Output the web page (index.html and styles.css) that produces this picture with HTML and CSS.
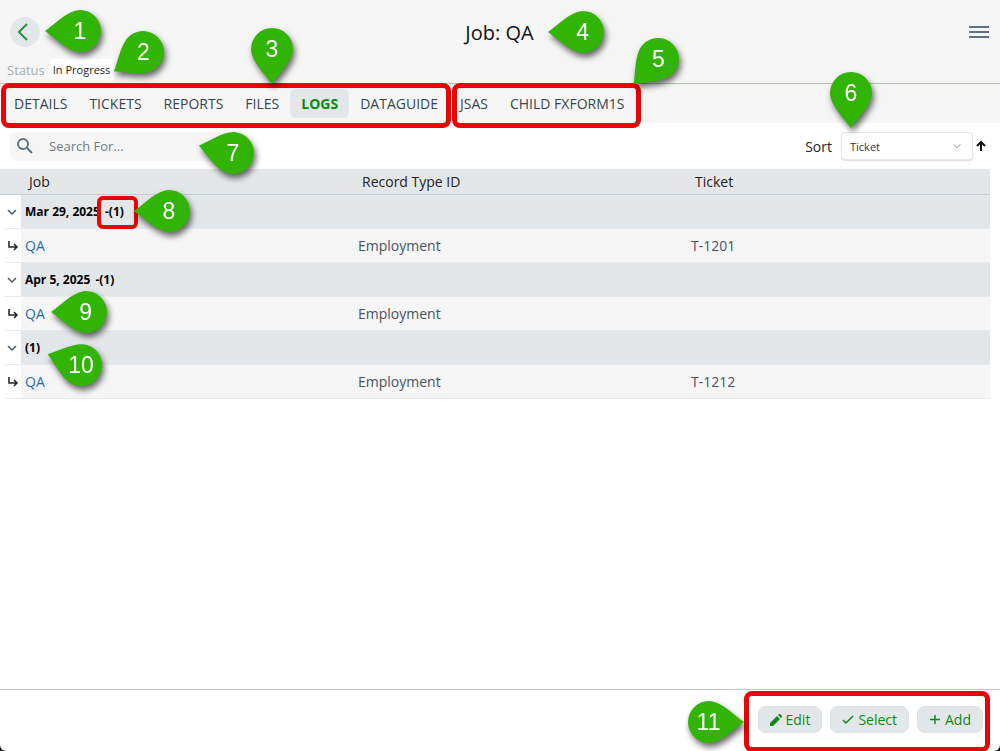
FILE: index.html
```html
<!DOCTYPE html>
<html lang="en">
<head>
    <meta charset="UTF-8">
    <meta name="viewport" content="width=device-width, initial-scale=1.0">
    <title>Job: QA</title>
    <link rel="stylesheet" href="styles.css">
</head>
<body>

<svg class="defs" aria-hidden="true">
    <symbol id="drop" viewBox="0 0 56 42">
        <path d="M0 21C9 15 23 0 35 0A21 21 0 0 1 35 42C23 42 9 27 0 21Z"/>
    </symbol>
    <symbol id="chevron" viewBox="0 0 10 10">
        <path d="M1 3l4 4 4-4"/>
    </symbol>
    <symbol id="child" viewBox="0 0 12 12">
        <path d="M2 1v6h8M7 4l3 3-3 3"/>
    </symbol>
</svg>

<div class="app">
    <!-- Header -->
    <header class="header">
        <div class="title-bar">
            <div class="anchor">
                <button class="back" aria-label="Back">
                    <svg class="line-icon" width="12" height="18" viewBox="0 0 12 18"><path d="M10 1L2 9l8 8"/></svg>
                </button>
                <span class="pin pin-1"><svg><use href="#drop"/></svg><b>1</b></span>
            </div>
            <h1 class="title anchor">Job: QA
                <span class="pin pin-4"><svg><use href="#drop"/></svg><b>4</b></span>
            </h1>
            <button class="menu" aria-label="Menu">
                <svg class="line-icon" width="20" height="14" viewBox="0 0 20 14"><path d="M0 2h20M0 7h20M0 12h20"/></svg>
            </button>
        </div>
        <div class="status">
            <span>Status</span>
            <span class="status-value anchor">In Progress
                <span class="pin pin-2"><svg><use href="#drop"/></svg><b>2</b></span>
            </span>
        </div>
    </header>

    <!-- Tabs -->
    <nav class="tabs">
        <div class="tab-group anchor">
            <a class="tab" href="#">DETAILS</a>
            <a class="tab" href="#">TICKETS</a>
            <a class="tab" href="#">REPORTS</a>
            <a class="tab" href="#">FILES</a>
            <a class="tab active" href="#">LOGS</a>
            <a class="tab" href="#">DATAGUIDE</a>
            <span class="box box-tabs"></span>
            <span class="pin pin-3"><svg><use href="#drop"/></svg><b>3</b></span>
        </div>
        <div class="tab-group anchor">
            <a class="tab" href="#">JSAS</a>
            <a class="tab" href="#">CHILD FXFORM1S</a>
            <span class="box box-forms"></span>
            <span class="pin pin-5"><svg><use href="#drop"/></svg><b>5</b></span>
        </div>
    </nav>

    <!-- Search and sort -->
    <div class="toolbar">
        <div class="search anchor">
            <svg class="line-icon" width="16" height="16" viewBox="0 0 16 16"><circle cx="6" cy="6" r="5"/><path d="M10 10l5 5"/></svg>
            <input type="text" placeholder="Search For..." aria-label="Search">
            <span class="pin pin-7"><svg><use href="#drop"/></svg><b>7</b></span>
        </div>
        <div class="sort">
            <label for="sort">Sort</label>
            <div class="select anchor">
                <select id="sort">
                    <option>Ticket</option>
                    <option>Job</option>
                </select>
                <svg class="select-arrow" width="8" height="8"><use href="#chevron"/></svg>
                <span class="pin pin-6"><svg><use href="#drop"/></svg><b>6</b></span>
            </div>
            <button class="direction" aria-label="Ascending">
                <svg class="line-icon" width="12" height="12" viewBox="0 0 12 12"><path d="M6 11V2M2 6l4-4 4 4"/></svg>
            </button>
        </div>
    </div>

    <!-- Log list -->
    <main class="content">
        <table class="logs">
            <colgroup>
                <col class="col-edge">
                <col class="col-toggle">
                <col class="col-data">
                <col class="col-data">
                <col>
            </colgroup>
            <thead>
                <tr>
                    <th colspan="2"></th>
                    <th>Job</th>
                    <th>Record Type ID</th>
                    <th>Ticket</th>
                </tr>
            </thead>
            <tbody>
                <tr class="group">
                    <td class="edge"></td>
                    <td class="toggle"><svg width="10" height="10"><use href="#chevron"/></svg></td>
                    <td colspan="3">Mar 29, 2025 <span class="count anchor">-(1)
                        <span class="box box-count"></span>
                        <span class="pin pin-8"><svg><use href="#drop"/></svg><b>8</b></span>
                    </span></td>
                </tr>
                <tr class="item">
                    <td class="edge"></td>
                    <td class="toggle"><svg width="12" height="12"><use href="#child"/></svg></td>
                    <td><a href="#">QA</a></td>
                    <td>Employment</td>
                    <td>T-1201</td>
                </tr>
                <tr class="group">
                    <td class="edge"></td>
                    <td class="toggle"><svg width="10" height="10"><use href="#chevron"/></svg></td>
                    <td colspan="3">Apr 5, 2025 <span class="count">-(1)</span></td>
                </tr>
                <tr class="item">
                    <td class="edge"></td>
                    <td class="toggle"><svg width="12" height="12"><use href="#child"/></svg></td>
                    <td><a class="anchor" href="#">QA
                        <span class="pin pin-9"><svg><use href="#drop"/></svg><b>9</b></span>
                    </a></td>
                    <td>Employment</td>
                    <td></td>
                </tr>
                <tr class="group">
                    <td class="edge"></td>
                    <td class="toggle"><svg width="10" height="10"><use href="#chevron"/></svg></td>
                    <td colspan="3"><span class="anchor">(1)
                        <span class="pin pin-10"><svg><use href="#drop"/></svg><b>10</b></span>
                    </span></td>
                </tr>
                <tr class="item">
                    <td class="edge"></td>
                    <td class="toggle"><svg width="12" height="12"><use href="#child"/></svg></td>
                    <td><a href="#">QA</a></td>
                    <td>Employment</td>
                    <td>T-1212</td>
                </tr>
            </tbody>
        </table>
    </main>

    <!-- Actions -->
    <footer class="footer">
        <div class="actions anchor">
            <button class="action">
                <svg width="12" height="12" viewBox="0 0 12 12"><path class="solid" d="M0 12V9l7-7 3 3-7 7zM8 1l1-1h1l2 2v1l-1 1z"/></svg>
                Edit
            </button>
            <button class="action">
                <svg width="12" height="12" viewBox="0 0 12 12"><path d="M1 6l3 3 7-7"/></svg>
                Select
            </button>
            <button class="action">
                <svg width="12" height="12" viewBox="0 0 12 12"><path d="M6 1v9M1 5.5h10"/></svg>
                Add
            </button>
            <span class="box box-actions"></span>
            <span class="pin pin-11"><svg><use href="#drop"/></svg><b>11</b></span>
        </div>
    </footer>
</div>

</body>
</html>
```
FILE: styles.css
```css
/* General Reset */
* {
    margin: 0;
    padding: 0;
    box-sizing: border-box;
}

html {
    background-color: #111;
}

body {
    font-family: "Segoe UI", "Open Sans", sans-serif;
    font-size: 14px;
    color: #222;
}

button,
input,
select {
    font: inherit;
    border: none;
    background: none;
}

button {
    cursor: pointer;
}

a {
    text-decoration: none;
}

.defs {
    position: absolute;
    width: 0;
    height: 0;
}

.app {
    display: flex;
    flex-direction: column;
    min-height: 100vh;
    background-color: #fff;
    border-radius: 0 0 6px 6px;
    overflow: hidden;
}

.anchor {
    position: relative;
}

.line-icon {
    display: block;
    fill: none;
    stroke: currentColor;
    stroke-width: 2;
}

/* Header */
.header {
    height: 84px;
    padding: 16px 11px 0 10px;
    background-color: #f6f6f6;
    border-bottom: 1px solid #a8cbae;
}

.title-bar {
    display: grid;
    grid-template-columns: 1fr auto 1fr;
    align-items: center;
    height: 32px;
}

.back {
    display: flex;
    align-items: center;
    justify-content: center;
    width: 30px;
    height: 30px;
    padding-right: 4px;
    border-radius: 50%;
    background-color: #e3e7ea;
    color: #2a9438;
}

.title {
    font-size: 20px;
    font-weight: 400;
    color: #111;
}

.menu {
    justify-self: end;
    color: #5b7282;
}

.status {
    display: flex;
    align-items: center;
    gap: 4px;
    margin: 11px 0 0 -3px;
    font-size: 13px;
    line-height: 22px;
    color: #a3adb5;
}

.status-value {
    padding: 0 4px;
    border-radius: 4px;
    background-color: #fff;
    font-size: 11px;
    color: #222;
}

/* Tabs */
.tabs {
    display: flex;
    height: 39px;
    padding: 5px 3px;
    background-color: #f6f6f6;
}

.tab-group {
    display: flex;
}

.tab {
    height: 29px;
    padding: 0 11px;
    border-radius: 6px;
    line-height: 29px;
    color: #37444e;
}

.tab.active {
    background-color: #e3e7ea;
    color: #0a8a12;
    font-weight: 700;
}

/* Search and sort */
.toolbar {
    display: flex;
    justify-content: space-between;
    align-items: center;
    height: 46px;
    padding: 0 13px 0 10px;
}

.search {
    display: flex;
    align-items: center;
    gap: 16px;
    width: 230px;
    height: 29px;
    padding: 0 7px;
    border-radius: 8px;
    background-color: #f6f6f6;
    font-size: 13px;
    color: #5b7282;
}

.search input {
    width: 140px;
}

.search input::placeholder {
    color: #6c7b87;
}

.sort {
    display: flex;
    align-items: center;
    gap: 9px;
}

.select select {
    display: block;
    width: 132px;
    height: 28px;
    padding: 0 8px;
    appearance: none;
    border: 1px solid #e6e6e6;
    border-radius: 4px;
    background-color: #fff;
    box-shadow: 0 1px 1px #ddd;
    font-size: 11px;
    color: #333;
}

.select-arrow {
    position: absolute;
    top: 10px;
    right: 12px;
    fill: none;
    stroke: #666;
}

.direction {
    margin-left: -7px;
    color: #111;
}

/* Log list */
.content {
    flex: 1;
    padding-right: 10px;
}

.logs {
    width: 100%;
    table-layout: fixed;
    border-collapse: separate;
    border-spacing: 0;
}

.col-edge {
    width: 4px;
}

.col-toggle {
    width: 17px;
}

.col-data {
    width: 333px;
}

.logs th {
    height: 26px;
    padding: 0 8px;
    border-bottom: 1px solid #c6ced3;
    background-color: #e3e7ea;
    font-weight: 400;
    text-align: left;
}

.logs td {
    height: 34px;
    padding: 0 4px;
    border-bottom: 1px solid #e8ebed;
    color: #47535d;
}

.logs .edge {
    padding: 0;
    border: none;
}

.logs .toggle {
    padding: 0 0 0 3px;
    background-color: #fff;
}

.toggle svg {
    display: block;
    fill: none;
    stroke: #222;
    stroke-width: 1.5;
}

.group .toggle svg {
    stroke: #4a5a66;
}

.group td:last-child {
    background-color: #e3e7ea;
    color: #000;
    font-size: 12px;
    font-weight: 700;
}

.count {
    margin-left: 2px;
}

.item td {
    background-color: #f6f6f6;
}

.item .edge {
    background-color: #fff;
}

.item a {
    color: #1c6ca8;
}

/* Footer */
.footer {
    display: flex;
    justify-content: flex-end;
    height: 62px;
    padding: 16px 17px;
    border-top: 1px solid #c0c8cd;
}

.actions {
    display: flex;
    gap: 8px;
}

.action {
    display: flex;
    align-items: center;
    gap: 4px;
    height: 27px;
    padding: 0 11px;
    border: 1px solid #dde1e4;
    border-radius: 8px;
    background-color: #e3e7ea;
    color: #0a8a12;
}

.action svg {
    fill: none;
    stroke: currentColor;
    stroke-width: 1.5;
}

.action .solid {
    fill: currentColor;
    stroke: none;
}

/* Red boxes */
.box {
    position: absolute;
    z-index: 1;
    border: 5px solid #e90505;
    border-radius: 8px;
    pointer-events: none;
}

.box-tabs {
    inset: -6px -2px -10px -2px;
}

.box-forms {
    inset: -6px -6px -10px 3px;
}

.box-count {
    inset: -7px -14px -9px -8px;
    border-width: 4px;
    border-radius: 6px;
}

.box-actions {
    inset: -15px -7px -17px -14px;
}

/* Numbered pins, rotated around the centre of the round end */
.pin {
    position: absolute;
    z-index: 2;
    width: 42px;
    height: 42px;
    filter: drop-shadow(2px 4px 3px rgba(0, 0, 0, 0.6));
    font-family: "Liberation Sans", Arial, sans-serif;
    font-size: 23px;
    line-height: 42px;
    text-align: center;
    color: #fff;
    pointer-events: none;
}

.pin svg {
    position: absolute;
    top: 0;
    left: -14px;
    width: 56px;
    height: 42px;
    transform-origin: 35px 21px;
    fill: #31b404;
}

.pin b {
    position: relative;
    font-weight: 400;
}

.pin-1 {
    left: 49px;
    top: -7px;
}

.pin-2 {
    left: calc(100% + 8px);
    top: -28px;
}

.pin-2 svg {
    transform: rotate(-34deg);
}

.pin-3 {
    left: 248px;
    top: -61px;
}

.pin-3 svg,
.pin-6 svg {
    transform: rotate(-90deg);
}

.pin-4 {
    left: calc(100% + 28px);
    top: -8px;
}

.pin-5 {
    right: -44px;
    top: -51px;
}

.pin-5 svg {
    transform: rotate(-46deg);
}

.pin-6 {
    left: -11px;
    top: -60px;
}

.pin-7 {
    left: 202px;
    top: 0;
}

.pin-7 svg {
    transform: rotate(12deg);
}

.pin-8 {
    left: calc(100% + 24px);
    top: -13px;
}

.pin-9 {
    left: calc(100% + 20px);
    top: -13px;
}

.pin-10 {
    left: calc(100% + 20px);
    top: 5px;
}

.pin-10 svg {
    transform: rotate(18deg);
}

.pin-11 {
    left: -70px;
    top: -5px;
}

.pin-11 svg {
    transform: rotate(180deg);
}
```
